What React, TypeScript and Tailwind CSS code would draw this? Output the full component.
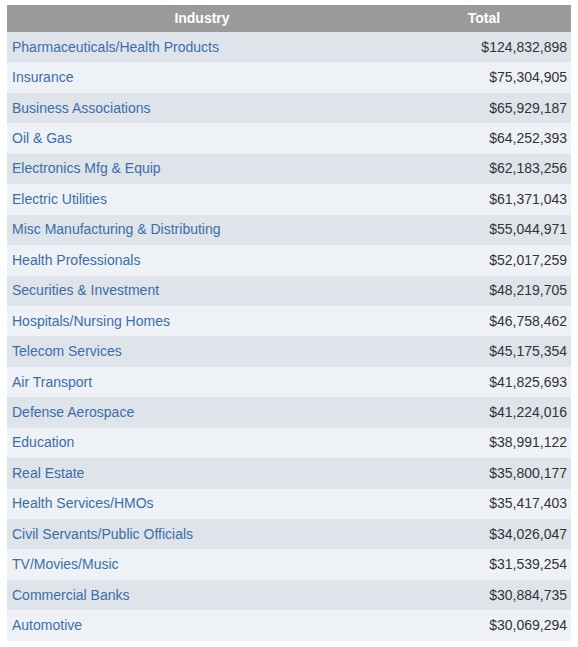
const rows: [string, string][] = [
  ['Pharmaceuticals/Health Products', '$124,832,898'],
  ['Insurance', '$75,304,905'],
  ['Business Associations', '$65,929,187'],
  ['Oil & Gas', '$64,252,393'],
  ['Electronics Mfg & Equip', '$62,183,256'],
  ['Electric Utilities', '$61,371,043'],
  ['Misc Manufacturing & Distributing', '$55,044,971'],
  ['Health Professionals', '$52,017,259'],
  ['Securities & Investment', '$48,219,705'],
  ['Hospitals/Nursing Homes', '$46,758,462'],
  ['Telecom Services', '$45,175,354'],
  ['Air Transport', '$41,825,693'],
  ['Defense Aerospace', '$41,224,016'],
  ['Education', '$38,991,122'],
  ['Real Estate', '$35,800,177'],
  ['Health Services/HMOs', '$35,417,403'],
  ['Civil Servants/Public Officials', '$34,026,047'],
  ['TV/Movies/Music', '$31,539,254'],
  ['Commercial Banks', '$30,884,735'],
  ['Automotive', '$30,069,294'],
]

export default function App() {
  return (
    <div className="bg-white w-[578px] h-[647px] pt-[5px] pl-[7px] font-['Liberation_Sans',Arial,sans-serif] text-[14px]">
      <div className="w-[564px]">
        {/* Header */}
        <div className="flex h-[27px] items-center bg-[#9a9a9a] text-white font-bold">
          <div className="w-[390px] text-center">Industry</div>
          <div className="flex-1 text-center">Total</div>
        </div>
        {rows.map(([name, total], i) => (
          <div
            key={name}
            className={`flex h-[30.45px] items-center ${i % 2 === 0 ? 'bg-[#dfe4eb]' : 'bg-[#eef2f6]'}`}
          >
            <div className="w-[390px] pl-[5px] text-[#3b6ea8]">{name}</div>
            <div className="flex-1 pr-[4px] text-right text-[#333333]">{total}</div>
          </div>
        ))}
      </div>
    </div>
  )
}
